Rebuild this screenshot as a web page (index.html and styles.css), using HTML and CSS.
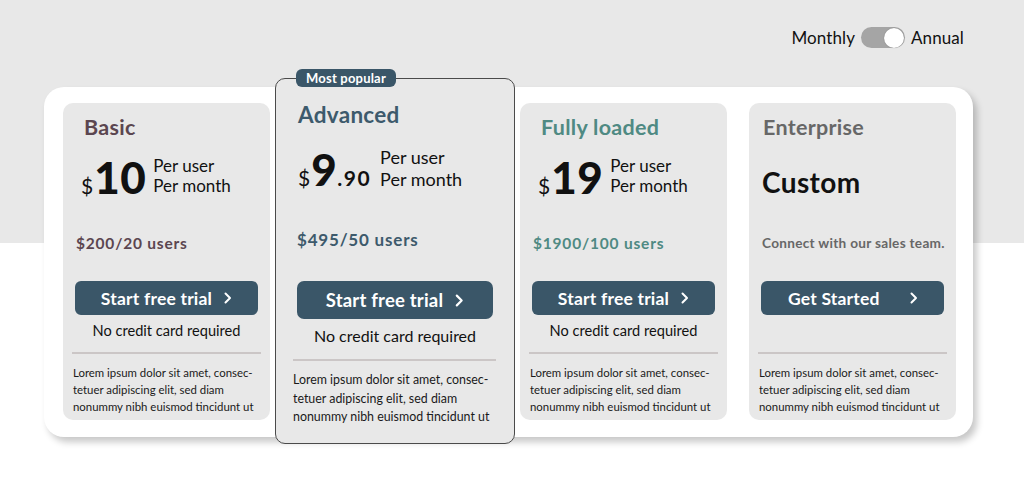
FILE: index.html
```html
<!DOCTYPE html>
<html lang="en">
<head>
<meta charset="utf-8">
<title>Pricing</title>
<link rel="stylesheet" href="styles.css">
</head>
<body>
<div class="toggle-row">
  <span class="toggle-label">Monthly</span>
  <span class="switch"><span class="knob"></span></span>
  <span class="toggle-label">Annual</span>
</div>

<div class="plans">
  <div class="card basic">
    <h2 class="title">Basic</h2>
    <div class="price"><span class="amount"><span class="cur">$</span><span class="num">10</span></span><span class="per">Per user<br>Per month</span></div>
    <div class="total">$200/20 users</div>
    <a class="btn">Start free trial <svg class="chev" viewBox="0 0 8 12" width="8" height="12"><polyline points="1.5,1.5 6,6 1.5,10.5"/></svg></a>
    <p class="note">No credit card required</p>
    <hr class="divider">
    <p class="lorem">Lorem ipsum dolor sit amet, consec-<br>tetuer adipiscing elit, sed diam<br>nonummy nibh euismod tincidunt ut</p>
  </div>

  <div class="card featured">
    <span class="badge">Most popular</span>
    <h2 class="title">Advanced</h2>
    <div class="price"><span class="amount"><span class="cur">$</span><span class="num">9</span><span class="cents">.90</span></span><span class="per">Per user<br>Per month</span></div>
    <div class="total">$495/50 users</div>
    <a class="btn">Start free trial <svg class="chev" viewBox="0 0 8 12" width="9" height="13"><polyline points="1.5,1.5 6,6 1.5,10.5"/></svg></a>
    <p class="note">No credit card required</p>
    <hr class="divider">
    <p class="lorem">Lorem ipsum dolor sit amet, consec-<br>tetuer adipiscing elit, sed diam<br>nonummy nibh euismod tincidunt ut</p>
  </div>

  <div class="card loaded">
    <h2 class="title">Fully loaded</h2>
    <div class="price"><span class="amount"><span class="cur">$</span><span class="num">19</span></span><span class="per">Per user<br>Per month</span></div>
    <div class="total">$1900/100 users</div>
    <a class="btn">Start free trial <svg class="chev" viewBox="0 0 8 12" width="8" height="12"><polyline points="1.5,1.5 6,6 1.5,10.5"/></svg></a>
    <p class="note">No credit card required</p>
    <hr class="divider">
    <p class="lorem">Lorem ipsum dolor sit amet, consec-<br>tetuer adipiscing elit, sed diam<br>nonummy nibh euismod tincidunt ut</p>
  </div>

  <div class="card enterprise">
    <h2 class="title">Enterprise</h2>
    <div class="custom">Custom</div>
    <div class="total">Connect with our sales team.</div>
    <a class="btn spread">Get Started <svg class="chev" viewBox="0 0 8 12" width="8" height="12"><polyline points="1.5,1.5 6,6 1.5,10.5"/></svg></a>
    <p class="note empty"></p>
    <hr class="divider">
    <p class="lorem">Lorem ipsum dolor sit amet, consec-<br>tetuer adipiscing elit, sed diam<br>nonummy nibh euismod tincidunt ut</p>
  </div>
</div>
</body>
</html>
```

FILE: styles.css
```css
* { box-sizing: border-box; }

html, body {
  margin: 0;
  padding: 0;
}

body {
  width: 1024px;
  height: 482px;
  overflow: hidden;
  font-family: "Lato", "Noto Sans", sans-serif;
  color: #111;
  background: linear-gradient(#e8e8e8 0, #e8e8e8 243px, #ffffff 243px);
}

/* toggle */
.toggle-row {
  height: 87px;
  display: flex;
  justify-content: flex-end;
  align-items: flex-start;
  gap: 6px;
  padding: 27px 60px 0 0;
}
.toggle-label {
  font-size: 17px;
  line-height: 21px;
  color: #111;
  letter-spacing: 0.1px;
}
.switch {
  width: 44px;
  height: 21px;
  border-radius: 11px;
  background: #a5a5a5;
  display: flex;
  justify-content: flex-end;
  align-items: center;
  padding: 0 1px;
}
.knob {
  width: 20px;
  height: 20px;
  border-radius: 50%;
  background: #fff;
  box-shadow: 0 0 1px rgba(0,0,0,0.4);
}

/* container */
.plans {
  width: 929px;
  height: 350px;
  margin-left: 44px;
  padding: 16px 17px 17px 19px;
  background: #fff;
  border-radius: 20px;
  box-shadow: 4px 5px 7px rgba(0,0,0,0.22);
  display: flex;
  gap: 22px;
}

.card {
  position: relative;
  width: 207px;
  height: 317px;
  flex: none;
  background: #e8e8e8;
  border-radius: 10px;
  padding: 12px 12px 0;
  display: flex;
  flex-direction: column;
}
.card > * { flex: none; }

.title {
  margin: 0;
  padding-left: 9px;
  font-size: 21.5px;
  line-height: 24px;
  font-weight: 700;
  letter-spacing: 0.3px;
}
.basic .title, .basic .total { color: #5b4650; }
.loaded .title, .loaded .total { color: #4f8a83; }
.enterprise .title, .enterprise .total { color: #676767; }
.featured .title, .featured .total { color: #3d5a6c; }

.price {
  margin-top: 18px;
  height: 40px;
  padding-left: 6px;
  display: flex;
  align-items: center;
  gap: 7px;
}
.amount {
  display: flex;
  align-items: baseline;
}
.cur {
  font-size: 21px;
  margin-right: 1px;
}
.num {
  font-size: 44px;
  font-weight: 900;
  line-height: 40px;
  letter-spacing: 0.5px;
}
.per {
  font-size: 17px;
  line-height: 20px;
  margin-top: -2px;
}

.total {
  margin-top: 37px;
  padding-left: 1px;
  font-size: 15.5px;
  line-height: 18px;
  font-weight: 700;
  letter-spacing: 0.8px;
  white-space: nowrap;
}

.btn {
  margin-top: 29px;
  height: 34px;
  border-radius: 6px;
  background: #3a5668;
  color: #fff;
  font-size: 17.5px;
  font-weight: 700;
  display: flex;
  align-items: center;
  justify-content: center;
  gap: 12px;
  letter-spacing: 0.2px;
}
.btn.spread {
  justify-content: space-between;
  padding: 0 26px 0 27px;
  font-size: 17.5px;
}
.chev polyline {
  fill: none;
  stroke: #fff;
  stroke-width: 2;
  stroke-linecap: round;
  stroke-linejoin: round;
}

.note {
  margin: 6px 0 0;
  height: 20px;
  line-height: 20px;
  font-size: 14.6px;
  text-align: center;
}

.divider {
  margin: 11px -3px 0;
  border: 0;
  height: 2px;
  background: #cbc6c6;
}

.lorem {
  margin: 10px 0 0 -2px;
  font-size: 11.4px;
  line-height: 17px;
  color: #1a1a1a;
  white-space: nowrap;
}

/* enterprise */
.enterprise .title { padding-left: 2px; }
.custom {
  margin-top: 29px;
  height: 29px;
  line-height: 29px;
  padding-left: 1px;
  font-size: 28px;
  font-weight: 700;
  letter-spacing: 0.4px;
}
.enterprise .total {
  margin-top: 37px;
  font-size: 13.6px;
  letter-spacing: 0.3px;
}

/* featured */
.card.featured {
  width: 240px;
  height: 366px;
  margin: -25px -17px -24px;
  padding: 0 21px;
  border: 1px solid #4a4a4a;
}
.badge {
  position: absolute;
  top: -10px;
  left: 20px;
  width: 100px;
  height: 18px;
  border-radius: 6px;
  background: #3a5668;
  color: #fff;
  font-size: 13px;
  font-weight: 700;
  line-height: 18px;
  text-align: center;
  letter-spacing: 0.2px;
}
.featured .title {
  margin-top: 23px;
  padding-left: 1px;
  font-size: 22.5px;
  line-height: 26px;
}
.featured .price {
  margin-top: 19px;
  height: 44px;
  padding-left: 1px;
  gap: 9px;
}
.featured .num {
  font-size: 44px;
  line-height: 44px;
}
.featured .cents {
  font-size: 21px;
  font-weight: 700;
  letter-spacing: 1.5px;
}
.featured .per {
  font-size: 18px;
  line-height: 22px;
}
.featured .total {
  margin-top: 39px;
  padding-left: 0;
  font-size: 17px;
  line-height: 20px;
  letter-spacing: 0.8px;
}
.featured .btn {
  margin-top: 31px;
  height: 38px;
  border-radius: 7px;
  font-size: 18.5px;
  gap: 12px;
}
.featured .note {
  margin-top: 6px;
  height: 22px;
  line-height: 22px;
  font-size: 16px;
}
.featured .divider {
  margin: 12px -3px 0 -4px;
}
.featured .lorem {
  margin: 10px 0 0 -4px;
  font-size: 12.4px;
  line-height: 18.5px;
}
```
